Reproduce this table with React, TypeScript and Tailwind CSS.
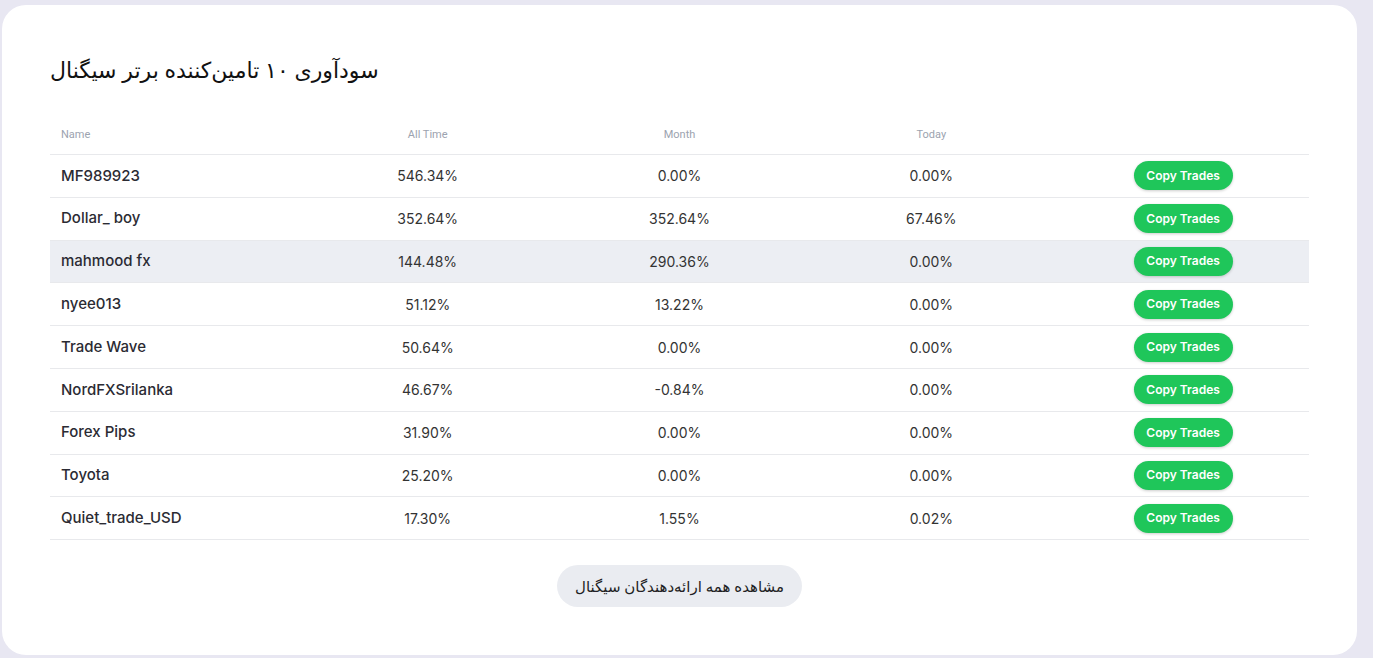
import React from "react";

interface Provider {
  name: string;
  allTime: string;
  month: string;
  today: string;
}

const providers: Provider[] = [
  { name: "MF989923", allTime: "546.34%", month: "0.00%", today: "0.00%" },
  { name: "Dollar_ boy", allTime: "352.64%", month: "352.64%", today: "67.46%" },
  { name: "mahmood fx", allTime: "144.48%", month: "290.36%", today: "0.00%" },
  { name: "nyee013", allTime: "51.12%", month: "13.22%", today: "0.00%" },
  { name: "Trade Wave", allTime: "50.64%", month: "0.00%", today: "0.00%" },
  { name: "NordFXSrilanka", allTime: "46.67%", month: "-0.84%", today: "0.00%" },
  { name: "Forex Pips", allTime: "31.90%", month: "0.00%", today: "0.00%" },
  { name: "Toyota", allTime: "25.20%", month: "0.00%", today: "0.00%" },
  { name: "Quiet_trade_USD", allTime: "17.30%", month: "1.55%", today: "0.02%" },
];

const HIGHLIGHTED = 2;

const App: React.FC = () => {
  return (
    <div className="min-h-screen bg-[#e8e7f2] pl-[2px] pr-[16px] pt-[5px] pb-[4px] font-['Inter',sans-serif]">
      <div className="bg-white rounded-[24px] px-12 pt-[48px] pb-[48px]">
        <h1
          dir="rtl"
          className="text-left w-fit h-8 leading-8 text-[22px] text-[#111] font-['Noto_Sans','DejaVu_Sans',sans-serif] mb-[27px]"
        >
          سودآوری ۱۰ تامین‌کننده برتر سیگنال
        </h1>

        <div className="w-full">
          <div className="grid grid-cols-5 h-[43px] pt-[4px] items-center border-b border-[#e8e9ec] text-[11px] text-[#9ca3af] font-['Roboto',sans-serif]">
            <div className="pl-[11px]">Name</div>
            <div className="text-center">All Time</div>
            <div className="text-center">Month</div>
            <div className="text-center">Today</div>
            <div />
          </div>

          {providers.map((p, i) => (
            <div
              key={p.name}
              className={`grid grid-cols-5 h-[42.8px] items-center border-b border-[#e8e9ec] ${
                i === HIGHLIGHTED ? "bg-[#eceef3]" : ""
              }`}
            >
              <div className="pl-[11px] text-[15px] font-medium text-[#2b2b33]">{p.name}</div>
              <div className="text-center text-[14px] text-[#333]">{p.allTime}</div>
              <div className="text-center text-[14px] text-[#333]">{p.month}</div>
              <div className="text-center text-[14px] text-[#333]">{p.today}</div>
              <div className="flex justify-center">
                <button className="h-[29px] w-[99px] rounded-full bg-[#1fc65a] text-white text-[12px] font-semibold shadow-[0_1px_3px_rgba(0,0,0,0.2)]">
                  Copy Trades
                </button>
              </div>
            </div>
          ))}
        </div>

        <div className="flex justify-center mt-[25px]">
          <button
            dir="rtl"
            className="h-[42px] w-[245px] rounded-full bg-[#eaecf1] text-[15px] text-[#1f1f24] font-['Noto_Sans','DejaVu_Sans',sans-serif]"
          >
            مشاهده همه ارائه‌دهندگان سیگنال
          </button>
        </div>
      </div>
    </div>
  );
};

export default App;
